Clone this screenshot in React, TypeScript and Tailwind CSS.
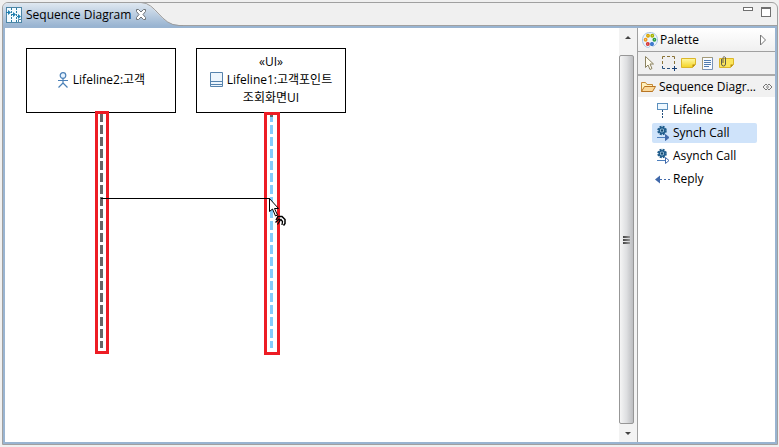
import React from "react";

function DiagramIcon() {
  return (
    <svg width="16" height="16" viewBox="0 0 16 16" fill="none" aria-hidden="true">
      <rect x="0.5" y="0.5" width="15" height="15" fill="#f4fbff" stroke="#4d86a6" />
      <path d="M5.500 1v14M10.500 1v14" stroke="#2c7ea6" strokeDasharray="2 1" />
      <path d="M0 5.500h3M6 7.500h2M11 9.500h1" stroke="#1d7fb0" />
      <path d="M2 3v5l3-2.500zM7 5v5l3-2.500zM12 7v5l3-2.500z" fill="#1d7fb0" />
      <path d="M12.500 15.500v-3h3" stroke="#4d86a6" fill="#fff" />
    </svg>
  );
}

function CloseIcon() {
  return (
    <svg width="12" height="11" viewBox="0 0 12 11" aria-hidden="true">
      <path
        d="M1.500 0.500h2L6 3l2.500-2.500h2v2L8 5.500l2.500 3v2h-2L6 8l-2.500 2.500h-2v-2L4 5.500l-2.500-3z"
        fill="#fff"
        stroke="#6f7478"
      />
    </svg>
  );
}

function PaletteIcon() {
  return (
    <svg width="16" height="16" viewBox="0 0 16 16" aria-hidden="true">
      <path
        d="M8 .5C3.500.5.5 3.500.5 8s3 7.500 6 7.500c1.500 0 .5-2 2-2.500 1.500 0 1.500 1.500 3 1 2.500-1 4-3.500 4-6 0-4.500-3-7.500-7.500-7.500z"
        fill="#eaf4fd"
        stroke="#a9c4e2"
      />
      <g fill="#fff" strokeWidth="1.500">
        <circle cx="6" cy="3.800" r="1.200" stroke="#d8a400" />
        <circle cx="10.300" cy="3.800" r="1.200" stroke="#a8b400" />
        <circle cx="3.600" cy="7.800" r="1.200" stroke="#f09a20" />
        <circle cx="12.400" cy="7.800" r="1.200" stroke="#2c9c45" />
        <circle cx="5.800" cy="12" r="1.200" stroke="#d63333" />
        <circle cx="10" cy="12" r="1.200" stroke="#2668c8" />
      </g>
    </svg>
  );
}

function SelectIcon() {
  return (
    <svg width="16" height="16" viewBox="0 0 16 16" aria-hidden="true">
      <path d="M3.500 1.500v11l2.500-2.500 2 4.500 2-1-2-4.500h3.500z" fill="#fffdf0" stroke="#8b8260" />
    </svg>
  );
}

function MarqueeIcon() {
  return (
    <svg width="16" height="16" viewBox="0 0 16 16" fill="none" aria-hidden="true">
      <path d="M1.500 4V1.500H4M6 1.500h3M11 1.500h2.500V4M1.500 6v3M13.500 6v3" stroke="#8a7337" />
      <path d="M1.500 11v2.500H4M6 13.500h3" stroke="#27507c" />
      <path d="M11 13.500h5M13.500 11v5" stroke="#173f74" />
    </svg>
  );
}

function NoteIcon() {
  return (
    <svg width="16" height="16" viewBox="0 0 16 16" aria-hidden="true">
      <defs>
        <linearGradient id="note" x1="0" y1="0" x2="0" y2="1">
          <stop offset="0" stopColor="#fff9a5" />
          <stop offset="1" stopColor="#f4d321" />
        </linearGradient>
      </defs>
      <path d="M1.500 3.500h14v6l-3 3h-11z" fill="url(#note)" stroke="#dbb62b" />
      <path d="M15.500 9.500h-3v3z" fill="#b98a10" />
    </svg>
  );
}

function TextIcon() {
  return (
    <svg width="16" height="16" viewBox="0 0 16 16" aria-hidden="true">
      <path d="M3.500 2.500h10v12h-10z" fill="#f8fbff" stroke="#7892b7" />
      <path d="M3.500 14.500v-12h10" fill="none" stroke="#a59b78" />
      <path d="M5 5.500h7M5 7.500h7M5 9.500h7M5 11.500h5" stroke="#527caf" />
    </svg>
  );
}

function AttachedNoteIcon() {
  return (
    <svg width="16" height="16" viewBox="0 0 16 16" aria-hidden="true">
      <path d="M1.500 3.500h14v6l-3 3h-11z" fill="#fbe65b" stroke="#dbb62b" />
      <path d="M15.500 9.500h-3v3z" fill="#b98a10" />
      <path d="M3.500 4v5a2 2 0 0 0 4 0V2.500a1.500 1.500 0 0 0-2.500 0V8" fill="none" stroke="#5e5c4d" />
    </svg>
  );
}

function FolderIcon() {
  return (
    <svg width="16" height="16" viewBox="0 0 16 16" aria-hidden="true">
      <path d="M1.500 12.500v-9h4l1.500 2h5.500v7z" fill="#fff1bd" stroke="#c58a36" />
      <path d="M1.500 12.500l3-5h11l-3 5z" fill="#fbd99a" stroke="#b87525" />
    </svg>
  );
}

function PinIcon() {
  return (
    <svg width="11" height="8" viewBox="0 0 11 8" fill="none" stroke="#777" aria-hidden="true">
      <path d="M4 1L1 4l3 3 1.500-1.500M5.500 2.500L4 1M7 1l3 3-3 3-1.500-1.500M5.500 2.500L7 1M4 4h3" />
    </svg>
  );
}

function LifelineIcon() {
  return (
    <svg width="16" height="16" viewBox="0 0 16 16" aria-hidden="true">
      <rect x="2.500" y="1.500" width="10" height="6" fill="#eef8ff" stroke="#5b8fbd" />
      <path d="M7.500 8v8" stroke="#234f7d" strokeDasharray="2 1" />
    </svg>
  );
}

function CallIcon({ filled }: { filled: boolean }) {
  return (
    <svg width="16" height="16" viewBox="0 0 16 16" aria-hidden="true">
      <circle cx="7" cy="5.500" r="3.800" fill="none" stroke="#1f5c8c" strokeWidth="2" strokeDasharray="2 1" />
      <circle cx="7" cy="5.500" r="2.800" fill="#a9cde3" stroke="#1f5c8c" strokeWidth="1.400" />
      <circle cx="7" cy="5.500" r="1.200" fill="#164a73" />
      <path d="M2 12.500h9" stroke="#4d7fbd" />
      <path d="M10.500 9.500v6l3.500-3z" fill={filled ? "#4169aa" : "#fff"} stroke="#4169aa" />
    </svg>
  );
}

function ReplyIcon() {
  return (
    <svg width="16" height="16" viewBox="0 0 16 16" aria-hidden="true">
      <path d="M0 8.500l5-4v8z" fill="#4169aa" />
      <path d="M5 8.500h2M9 8.500h2M13 8.500h2" stroke="#4169aa" />
    </svg>
  );
}

function ActorIcon() {
  return (
    <svg width="12" height="16" viewBox="0 0 12 16" fill="none" stroke="#4b80b7" strokeWidth="1.200" aria-hidden="true">
      <circle cx="6" cy="3.500" r="2.800" fill="#e6f3ff" />
      <path d="M6 6.500v5M1 8.500h10M6 11l-4.500 4.500M6 11l4.500 4.500" />
    </svg>
  );
}

function ScreenIcon() {
  return (
    <svg width="13" height="15" viewBox="0 0 13 15" fill="#edf5fc" stroke="#5683ad" aria-hidden="true">
      <path d="M.5.5h12v14H.5zM1 9.500h11M1 12.500h11" />
    </svg>
  );
}

function CallCursor() {
  return (
    <svg className="absolute left-[263px] top-[170px]" width="20" height="30" viewBox="0 0 20 30" aria-hidden="true">
      <path d="M1.500.5v13l3-2.500 3 7 2-1-3-6.500h4z" fill="#fff" stroke="#000" />
      <path d="M8 22l2-3.500h4l3 3v4l-1.500 2" fill="none" stroke="#000" strokeWidth="1.500" />
      <path d="M7.500 24.500l3.500-3.500 1 1.500-2.500 4M12.500 21l2 2.500-.5 3.500" fill="none" stroke="#000" strokeWidth="1.300" />
    </svg>
  );
}

const toolButtons = [
  { label: "Select", icon: <SelectIcon /> },
  { label: "Marquee", icon: <MarqueeIcon /> },
  { label: "Note", icon: <NoteIcon /> },
  { label: "Text", icon: <TextIcon /> },
  { label: "Note attachment", icon: <AttachedNoteIcon /> },
];

const entries = [
  { label: "Lifeline", icon: <LifelineIcon />, selected: false },
  { label: "Synch Call", icon: <CallIcon filled />, selected: true },
  { label: "Asynch Call", icon: <CallIcon filled={false} />, selected: false },
  { label: "Reply", icon: <ReplyIcon />, selected: false },
];

function TabBar() {
  return (
    <header className="flex h-[25px] shrink-0 items-start justify-between border-b-2 border-[#99b4d1]">
      <div className="relative flex h-[23px] w-[180px] items-center pl-[3px]">
        <svg className="absolute inset-0" width="180" height="23" viewBox="0 0 180 23" aria-hidden="true">
          <defs>
            <linearGradient id="tab" x1="0" y1="0" x2="0" y2="1">
              <stop offset="0" stopColor="#dfe8f1" />
              <stop offset="1" stopColor="#99b4d1" />
            </linearGradient>
          </defs>
          <path d="M0 0h138c14 0 19 22 38 22h4v1H0z" fill="url(#tab)" />
          <path d="M138 -.5c15 0 20 23 38 23h4" fill="none" stroke="#9b9b9b" />
        </svg>
        <div className="relative flex items-center">
          <DiagramIcon />
          <h1 className="ml-1 whitespace-nowrap">Sequence Diagram</h1>
          <button className="ml-1" aria-label="Close">
            <CloseIcon />
          </button>
        </div>
      </div>
      <div className="flex h-[23px] flex-1 justify-end gap-2 border-b border-[#a0a0a0] pr-[6px] pt-1">
        <button className="flex h-[10px] items-start" aria-label="Minimize">
          <span className="h-1 w-[10px] border border-[#707070] bg-white" />
        </button>
        <button className="h-[10px] w-[10px] border border-t-2 border-[#707070] bg-white" aria-label="Maximize">
        </button>
      </div>
    </header>
  );
}

function Canvas() {
  return (
    <main className="relative min-w-0 flex-1 overflow-hidden bg-white">
      <section className="absolute left-[21px] top-5 flex h-[65px] w-[150px] items-center justify-center border border-black pb-[2px]">
        <ActorIcon />
        <span className="ml-1">Lifeline2:고객</span>
      </section>
      <section className="absolute left-[191px] top-5 flex h-[65px] w-[150px] flex-col items-center justify-center border border-black pb-[2px] leading-[18px]">
        <span>«UI»</span>
        <span className="flex items-center gap-1 whitespace-nowrap">
          <ScreenIcon />
          Lifeline1:고객포인트
        </span>
        <span>조회화면UI</span>
      </section>
      <div className="absolute left-[90px] top-[83px] flex h-[243px] w-[14px] border-[3px] border-[#ed1c24] pb-[3px] pl-[2px]">
        <div className="w-[3px] bg-[repeating-linear-gradient(to_bottom,#666_0_8px,#fff_8px_11px,#666_11px_12px)]" />
      </div>
      <div className="absolute left-[259px] top-[84px] flex h-[243px] w-4 flex-col border-[3px] border-[#ed1c24] pb-1 pl-[3px]">
        <div className="h-[2px] w-[3px] bg-[#666]" />
        <div className="w-[3px] flex-1 bg-[repeating-linear-gradient(to_bottom,#84cbfa_0_5px,#fff_5px_8px,#84cbfa_8px_12px)]" />
      </div>
      <div className="absolute left-[96px] top-[170px] h-px w-[169px] bg-black" />
      <CallCursor />
    </main>
  );
}

function ScrollBar() {
  return (
    <div className="flex w-[18px] shrink-0 flex-col bg-[#f3f3f3]">
      <button className="flex h-[27px] shrink-0 items-start justify-center pt-2" aria-label="Scroll up">
        <span className="border-x-[3px] border-b-[3px] border-x-transparent border-b-[#444]" />
      </button>
      <div className="mr-[3px] flex flex-1 items-center justify-center rounded-[2px] border border-[#979797] bg-linear-to-r from-[#f5f5f5] via-[#dedfe1] to-[#bcbdc0]">
        <div className="flex flex-col gap-px">
          <span className="h-[2px] w-[7px] bg-linear-to-r from-[#444] to-[#999]" />
          <span className="h-[2px] w-[7px] bg-linear-to-r from-[#444] to-[#999]" />
          <span className="h-[2px] w-[7px] bg-linear-to-r from-[#444] to-[#999]" />
        </div>
      </div>
      <button className="flex h-[18px] shrink-0 items-center justify-center" aria-label="Scroll down">
        <span className="border-x-[3px] border-t-[3px] border-x-transparent border-t-[#444]" />
      </button>
    </div>
  );
}

function Palette() {
  return (
    <aside className="w-[138px] shrink-0 border-l border-[#a0a0a0] bg-white">
      <div className="flex h-6 items-center border-b border-[#a0a0a0] bg-linear-to-b from-white to-[#f0f0f0] pl-1 pr-2">
        <PaletteIcon />
        <h2 className="ml-[2px] flex-1">Palette</h2>
        <button aria-label="Collapse palette">
          <svg width="8" height="12" viewBox="0 0 8 12" aria-hidden="true">
            <path d="M1.500 1v10l5-5z" fill="#fff" stroke="#777" />
          </svg>
        </button>
      </div>
      <div className="flex h-6 items-center gap-[3px] border-b-2 border-[#aaa] bg-[#f0f0f0] pl-1">
        {toolButtons.map((tool) => (
          <button key={tool.label} aria-label={tool.label}>
            {tool.icon}
          </button>
        ))}
      </div>
      <div className="flex h-[21px] items-center justify-between bg-[#f1f1f1] pl-[2px] pr-[2px]">
        <button className="flex items-center gap-[3px] whitespace-nowrap">
          <FolderIcon />
          Sequence Diagr...
        </button>
        <button aria-label="Pin open">
          <PinIcon />
        </button>
      </div>
      <ul className="ml-[14px] mr-[18px] mt-[3px] flex flex-col gap-[3px]">
        {entries.map((entry) => (
          <li key={entry.label}>
            <button
              className={
                entry.selected
                  ? "flex h-5 w-full items-center gap-[2px] rounded-[2px] bg-[#cfe3fa] pl-[3px]"
                  : "flex h-5 w-full items-center gap-[2px] pl-[3px]"
              }
            >
              {entry.icon}
              {entry.label}
            </button>
          </li>
        ))}
      </ul>
    </aside>
  );
}

export default function App() {
  return (
    <div className="h-screen bg-[#f0f0f0] py-[2px] pl-[2px] pr-px font-['Open_Sans','Noto_Sans_CJK_KR',sans-serif] text-[12px] leading-4 text-black">
      <div className="flex h-full flex-col overflow-hidden rounded-t-[6px] border border-[#a0a0a0]">
        <TabBar />
        <div className="flex min-h-0 flex-1 border-x-2 border-b-2 border-[#99b4d1]">
          <Canvas />
          <ScrollBar />
          <Palette />
        </div>
      </div>
    </div>
  );
}
